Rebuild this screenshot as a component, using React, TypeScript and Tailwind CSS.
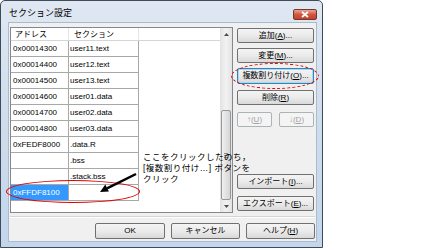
import type { ReactNode } from "react";

type BtnProps = {
  children: ReactNode;
  className?: string;
  focused?: boolean;
  disabled?: boolean;
};

function Btn({ children, className = "", focused, disabled }: BtnProps) {
  let look =
    "border-[#707070] bg-gradient-to-b from-[#f4f4f4] via-[#ebebeb] to-[#d9d9d9] text-black";
  if (focused)
    look =
      "border-[#3c7fb1] bg-gradient-to-b from-[#f4f4f4] via-[#ebebeb] to-[#d9d9d9] text-black shadow-[inset_0_0_0_1px_#9fdcf8]";
  if (disabled) look = "border-[#adb2b5] bg-[#f4f4f4] text-[#a3a3a3]";
  return (
    <div
      className={`flex items-center justify-center rounded-[2px] border text-[8px] leading-none ${look} ${className}`}
    >
      {children}
    </div>
  );
}

const rows = [
  { addr: "0x00014300", sec: "user11.text" },
  { addr: "0x00014400", sec: "user12.text" },
  { addr: "0x00014500", sec: "user13.text" },
  { addr: "0x00014600", sec: "user01.data" },
  { addr: "0x00014700", sec: "user02.data" },
  { addr: "0x00014800", sec: "user03.data" },
  { addr: "0xFEDF8000", sec: ".data.R" },
  { addr: "", sec: ".bss" },
  { addr: "", sec: ".stack.bss" },
];

function App() {
  return (
    <div className="relative h-[250px] w-[434px] overflow-hidden bg-white font-['Liberation_Sans','Noto_Sans_CJK_JP',sans-serif]">
      {/* window */}
      <div className="flex h-[248px] w-[323px] flex-col rounded-t-[5px] border border-[#3e4b5b] bg-gradient-to-b from-[#dfe8f2] via-[#cfdcec] to-[#c3d6ec]">
        {/* title bar */}
        <div className="flex h-[21px] items-start">
          <div className="ml-[8px] mt-[6px] text-[9px] leading-[12px] text-black">
            セクション設定
          </div>
          <div className="ml-auto mr-[5px] mt-[8px] flex h-[11px] w-[24px] items-center justify-center rounded-[2px] border border-[#6b3a33] bg-gradient-to-b from-[#e8a496] via-[#d2563f] to-[#c6412a]">
            <svg width="8" height="7" viewBox="0 0 8 7">
              <path d="M1 1 L7 6 M7 1 L1 6" stroke="#fff" strokeWidth="1.8" />
            </svg>
          </div>
        </div>

        {/* client */}
        <div className="ml-[7px] mr-[5px] mb-[5px] flex flex-1 flex-col border border-[#a9bccf] bg-[#f0f0f0] px-[1px] pt-[4px]">
          <div className="flex h-[186px]">
            {/* list */}
            <div className="flex w-[223px] border border-[#828790] bg-white">
              <div className="flex flex-1 flex-col">
                <div className="flex h-[13px] border-b border-[#d5d5d5] text-[8px] leading-[13px] text-black">
                  <div className="w-[58px] border-r border-[#e5e5e5] pl-[4px]">アドレス</div>
                  <div className="w-[70px] border-r border-[#e5e5e5] pl-[5px]">セクション</div>
                </div>
                {rows.map((r) => (
                  <div key={r.addr + r.sec} className="flex h-[16px] text-[8px] leading-[15px] text-black">
                    <div className="w-[58px] border-b border-r border-[#a8a8a8] pl-[2px]">{r.addr}</div>
                    <div className="w-[70px] border-b border-r border-[#a8a8a8] pl-[1px]">{r.sec}</div>
                  </div>
                ))}
                <div className="flex h-[16px] text-[8px] leading-[15px]">
                  <div className="w-[58px] border-b border-r border-[#a8a8a8] bg-[#3399ff] pl-[2px] text-white">
                    0xFFDF8100
                  </div>
                  <div className="w-[70px] border-b border-r border-[#a8a8a8]"></div>
                </div>
              </div>
              {/* scrollbar */}
              <div className="flex w-[12px] flex-col bg-gradient-to-r from-[#e3e3e3] via-[#f2f2f2] to-[#e3e3e3]">
                <div className="flex h-[13px] items-center justify-center">
                  <svg width="5" height="3" viewBox="0 0 5 3">
                    <path d="M0 3 L2.5 0 L5 3 Z" fill="#4d4d4d" />
                  </svg>
                </div>
                <div className="h-[69px]"></div>
                <div className="mx-[1px] flex h-[90px] items-center justify-center rounded-[2px] border border-[#979797] bg-gradient-to-r from-[#f0f0f0] to-[#d5d5d5]">
                  <div className="flex flex-col gap-[1px]">
                    <div className="h-[1px] w-[4px] bg-[#8a8a8a]"></div>
                    <div className="h-[1px] w-[4px] bg-[#8a8a8a]"></div>
                    <div className="h-[1px] w-[4px] bg-[#8a8a8a]"></div>
                  </div>
                </div>
                <div className="flex flex-1 items-center justify-center">
                  <svg width="5" height="3" viewBox="0 0 5 3">
                    <path d="M0 0 L2.5 3 L5 0 Z" fill="#4d4d4d" />
                  </svg>
                </div>
              </div>
            </div>

            {/* right buttons */}
            <div className="ml-[4px] flex w-[77px] flex-col pt-[1px]">
              <Btn className="h-[15px]">
                追加(<u>A</u>)...
              </Btn>
              <Btn className="mt-[5px] h-[15px]">
                変更(<u>M</u>)...
              </Btn>
              <Btn focused className="mt-[5px] h-[16px]">
                複数割り付け(<u>O</u>)...
              </Btn>
              <Btn className="mt-[6px] h-[15px]">
                削除(<u>R</u>)
              </Btn>
              <div className="mt-[7px] flex justify-between">
                <Btn disabled className="h-[15px] w-[35px]">
                  ↑(<u>U</u>)
                </Btn>
                <Btn disabled className="h-[15px] w-[35px]">
                  ↓(<u>D</u>)
                </Btn>
              </div>
              <Btn className="mt-[47px] h-[15px]">
                インポート(<u>I</u>)...
              </Btn>
              <Btn className="mt-[7px] h-[15px]">
                エクスポート(<u>E</u>)...
              </Btn>
            </div>
          </div>

          {/* separator */}
          <div className="mt-[3px] h-[2px] border-b border-t border-b-white border-t-[#d5d5d5]"></div>

          {/* bottom buttons */}
          <div className="mt-[5px] flex justify-end gap-[6px]">
            <Btn className="h-[16px] w-[70px]">OK</Btn>
            <Btn className="h-[16px] w-[69px]">キャンセル</Btn>
            <Btn className="h-[16px] w-[69px]">
              ヘルプ(<u>H</u>)
            </Btn>
          </div>
        </div>
      </div>

      {/* annotation */}
      <div className="absolute left-[143px] top-[152px] text-[8.5px] leading-[11px] tracking-[0.5px] text-black">
        <div>ここをクリックしたのち，</div>
        <div>[複数割り付け…] ボタンを</div>
        <div>クリック</div>
      </div>
      <div className="absolute left-[6px] top-[180px] h-[23px] w-[134px] rounded-[50%] border border-[#e00000]"></div>
      <div className="absolute left-[231px] top-[63px] h-[26px] w-[88px] rounded-[50%] border border-dashed border-[#e00000]"></div>
      <svg className="absolute left-0 top-0" width="434" height="250" viewBox="0 0 434 250">
        <line x1="136" y1="174" x2="107" y2="188.3" stroke="#000" strokeWidth="2.5" />
        <polygon points="100,192 108.9,191.6 105.3,184.6" fill="#000" />
      </svg>
    </div>
  );
}

export default App;
